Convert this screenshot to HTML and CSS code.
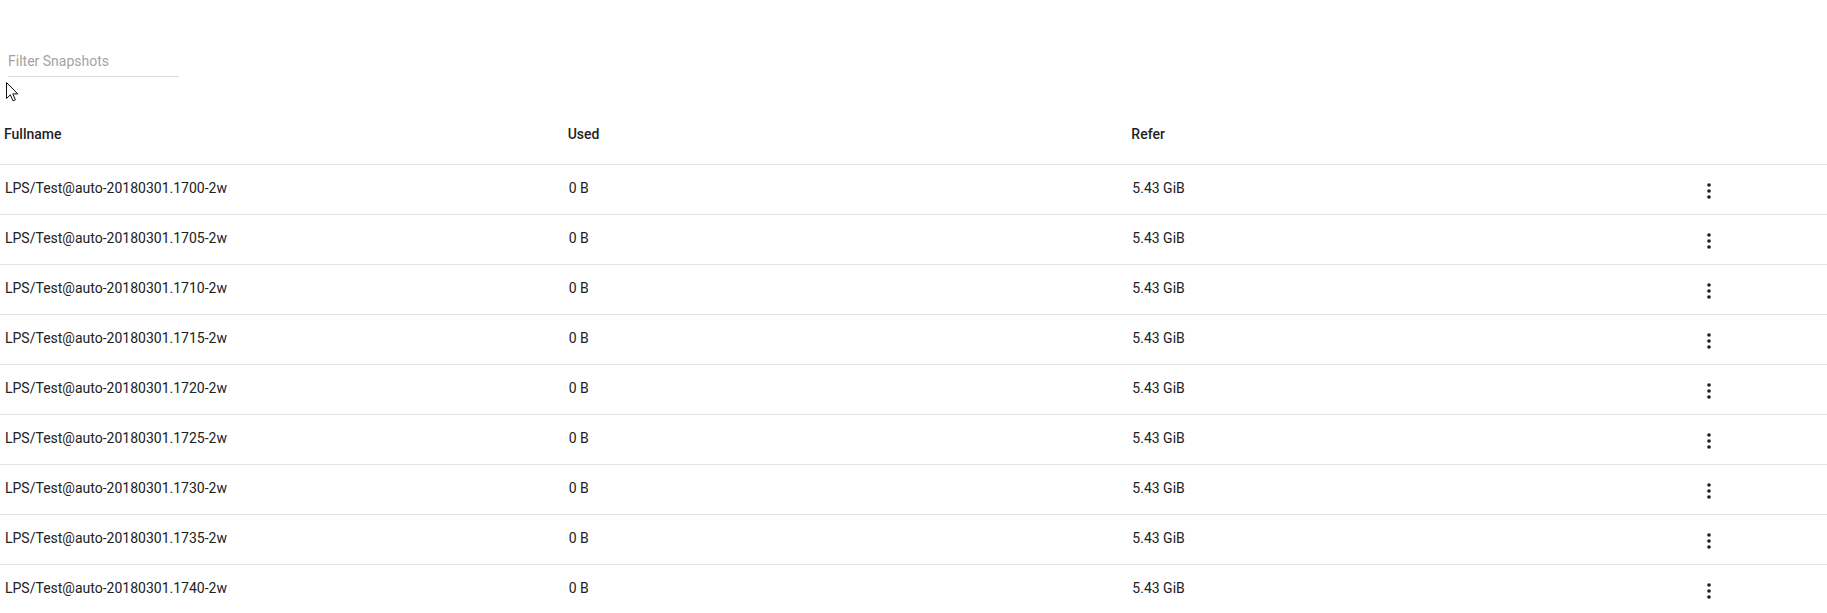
FILE: index.html
```html
<!DOCTYPE html>
<html lang="en">
<head>
<meta charset="utf-8">
<title>Snapshots</title>
<link rel="stylesheet" href="styles.css">
</head>
<body>
<div class="page">
  <div class="filter">
    <input class="filter-input" type="text" placeholder="Filter Snapshots">
  </div>
  <div class="table">
    <div class="row head">
      <div class="cell">Fullname</div>
      <div class="cell">Used</div>
      <div class="cell">Refer</div>
      <div class="cell"></div>
    </div>
    <div class="row">
      <div class="cell">LPS/Test@auto-20180301.1700-2w</div><div class="cell">0 B</div><div class="cell">5.43 GiB</div>
      <div class="cell act"><svg class="kebab" viewBox="0 0 24 24"><circle cx="12" cy="6" r="1.8"/><circle cx="12" cy="12" r="1.8"/><circle cx="12" cy="18" r="1.8"/></svg></div>
    </div>
    <div class="row">
      <div class="cell">LPS/Test@auto-20180301.1705-2w</div><div class="cell">0 B</div><div class="cell">5.43 GiB</div>
      <div class="cell act"><svg class="kebab" viewBox="0 0 24 24"><circle cx="12" cy="6" r="1.8"/><circle cx="12" cy="12" r="1.8"/><circle cx="12" cy="18" r="1.8"/></svg></div>
    </div>
    <div class="row">
      <div class="cell">LPS/Test@auto-20180301.1710-2w</div><div class="cell">0 B</div><div class="cell">5.43 GiB</div>
      <div class="cell act"><svg class="kebab" viewBox="0 0 24 24"><circle cx="12" cy="6" r="1.8"/><circle cx="12" cy="12" r="1.8"/><circle cx="12" cy="18" r="1.8"/></svg></div>
    </div>
    <div class="row">
      <div class="cell">LPS/Test@auto-20180301.1715-2w</div><div class="cell">0 B</div><div class="cell">5.43 GiB</div>
      <div class="cell act"><svg class="kebab" viewBox="0 0 24 24"><circle cx="12" cy="6" r="1.8"/><circle cx="12" cy="12" r="1.8"/><circle cx="12" cy="18" r="1.8"/></svg></div>
    </div>
    <div class="row">
      <div class="cell">LPS/Test@auto-20180301.1720-2w</div><div class="cell">0 B</div><div class="cell">5.43 GiB</div>
      <div class="cell act"><svg class="kebab" viewBox="0 0 24 24"><circle cx="12" cy="6" r="1.8"/><circle cx="12" cy="12" r="1.8"/><circle cx="12" cy="18" r="1.8"/></svg></div>
    </div>
    <div class="row">
      <div class="cell">LPS/Test@auto-20180301.1725-2w</div><div class="cell">0 B</div><div class="cell">5.43 GiB</div>
      <div class="cell act"><svg class="kebab" viewBox="0 0 24 24"><circle cx="12" cy="6" r="1.8"/><circle cx="12" cy="12" r="1.8"/><circle cx="12" cy="18" r="1.8"/></svg></div>
    </div>
    <div class="row">
      <div class="cell">LPS/Test@auto-20180301.1730-2w</div><div class="cell">0 B</div><div class="cell">5.43 GiB</div>
      <div class="cell act"><svg class="kebab" viewBox="0 0 24 24"><circle cx="12" cy="6" r="1.8"/><circle cx="12" cy="12" r="1.8"/><circle cx="12" cy="18" r="1.8"/></svg></div>
    </div>
    <div class="row">
      <div class="cell">LPS/Test@auto-20180301.1735-2w</div><div class="cell">0 B</div><div class="cell">5.43 GiB</div>
      <div class="cell act"><svg class="kebab" viewBox="0 0 24 24"><circle cx="12" cy="6" r="1.8"/><circle cx="12" cy="12" r="1.8"/><circle cx="12" cy="18" r="1.8"/></svg></div>
    </div>
    <div class="row">
      <div class="cell">LPS/Test@auto-20180301.1740-2w</div><div class="cell">0 B</div><div class="cell">5.43 GiB</div>
      <div class="cell act"><svg class="kebab" viewBox="0 0 24 24"><circle cx="12" cy="6" r="1.8"/><circle cx="12" cy="12" r="1.8"/><circle cx="12" cy="18" r="1.8"/></svg></div>
    </div>
  </div>
  <svg class="cursor" viewBox="0 0 13 20"><path d="M0.5 0.5 L0.5 16.5 L4.3 12.8 L7 18.8 L9.4 17.8 L6.8 11.9 L11.8 11.9 Z"/></svg>
</div>
</body>
</html>
```
FILE: styles.css
```css
html, body {
  margin: 0;
  padding: 0;
  background: #ffffff;
  overflow: hidden;
}
body {
  font-family: Roboto, "Liberation Sans", sans-serif;
  font-size: 14px;
  color: #212121;
}
.page {
  position: relative;
}
.filter {
  padding: 51px 0 0 8px;
}
.filter-input {
  display: block;
  width: 171px;
  box-sizing: border-box;
  margin: 0;
  padding: 0 0 5px 0;
  border: none;
  border-bottom: 1px solid #dcdcdc;
  font-family: Roboto, "Liberation Sans", sans-serif;
  font-size: 14px;
  line-height: 20px;
  height: 26px;
  color: #212121;
  background: transparent;
  outline: none;
}
.filter-input::placeholder {
  color: #a3a3a3;
}
.table {
  margin-top: 31px;
}
.row {
  display: grid;
  grid-template-columns: 1fr 1fr 1fr 136px;
  border-bottom: 1px solid #e3e3e3;
  height: 50px;
  box-sizing: border-box;
}
.row.head {
  height: 57px;
}
.cell {
  line-height: 20px;
  padding: 13px 0 0 5px;
  white-space: nowrap;
}
.head .cell {
  font-weight: 500;
  padding: 16px 0 0 4px;
  color: #1f1f1f;
}
.cell.act {
  padding: 14px 0 0 6px;
}
.kebab {
  display: block;
  width: 24px;
  height: 24px;
  fill: #1e1e1e;
}
.cursor {
  position: absolute;
  left: 6px;
  top: 82px;
  width: 13px;
  height: 20px;
  fill: #ffffff;
  stroke: #111111;
  stroke-width: 1;
  stroke-linejoin: miter;
}
```
